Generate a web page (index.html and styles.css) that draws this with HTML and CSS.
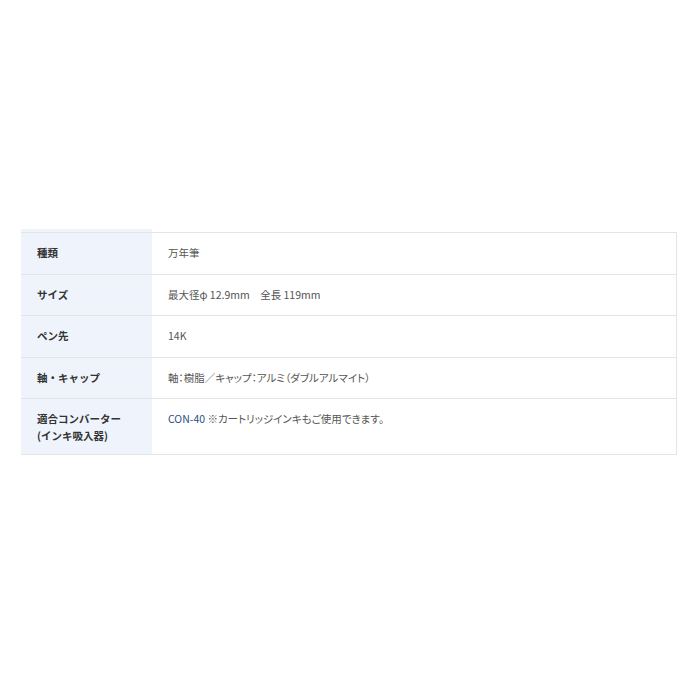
FILE: index.html
```html
<!DOCTYPE html>
<html lang="ja">
<head>
<meta charset="utf-8">
<link rel="stylesheet" href="styles.css">
</head>
<body>
<div class="wrap">
<table class="spec">
<tr class="cut"><th></th><td></td></tr>
<tr><th>種類</th><td>万年筆</td></tr>
<tr><th>サイズ</th><td>最大径φ 12.9mm　全長 119mm</td></tr>
<tr><th>ペン先</th><td>14K</td></tr>
<tr><th>軸・キャップ</th><td>軸：樹脂／キャップ：アルミ（ダブルアルマイト）</td></tr>
<tr class="last"><th>適合コンバーター<br>(インキ吸入器)</th><td><a class="link">CON-40</a> ※カートリッジインキもご使用できます。</td></tr>
</table>
</div>
</body>
</html>
```
FILE: styles.css
```css
html, body {
  margin: 0;
  padding: 0;
  background: #ffffff;
}
.wrap {
  padding: 229px 0 0 21px;
}
.spec {
  width: 656px;
  border-collapse: collapse;
  font-family: "Noto Sans CJK JP", "Noto Sans", sans-serif;
  font-size: 10.5px;
  line-height: 16.5px;
}
.spec th,
.spec td {
  text-align: left;
  vertical-align: top;
  padding: 12px 16px;
  border-bottom: 1px solid #e4e4e4;
}
.spec th {
  width: 99px;
  background: #eff3fb;
  color: #333333;
  font-weight: bold;
}
.spec td {
  color: #555555;
  border-right: 1px solid #e4e4e4;
  font-feature-settings: "palt";
}
.spec .cut th,
.spec .cut td {
  padding: 0;
  height: 3px;
}
.spec .cut td {
  border-right: none;
}
.spec .last th,
.spec .last td {
  padding-bottom: 10px;
}
.link {
  color: #2b4f82;
  text-decoration: none;
}
```
